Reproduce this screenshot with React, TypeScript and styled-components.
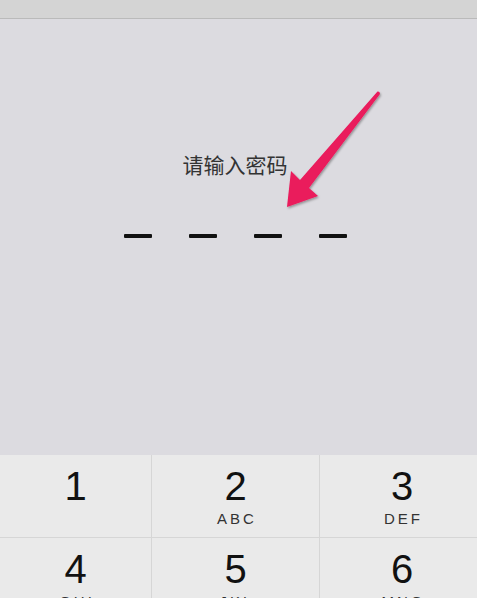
import React from "react";
import styled, { createGlobalStyle } from "styled-components";

const GlobalStyle = createGlobalStyle`
    html, body {
        margin: 0;
        padding: 0;
        background: #dcdbe0;
    }
    body {
        font-family: "Liberation Sans", "Noto Sans CJK SC", Arial, sans-serif;
    }
`;

const Screen = styled.div`
    position: relative;
    width: 477px;
    height: 598px;
    overflow: hidden;
    display: flex;
    flex-direction: column;
    background: #dcdbe0;
`;

const TopBar = styled.div`
    height: 18px;
    flex-shrink: 0;
    background: #d4d4d4;
    border-bottom: 1px solid #bababa;
`;

const Prompt = styled.div`
    height: 436px;
    flex-shrink: 0;
    display: flex;
    flex-direction: column;
    align-items: center;
    padding-right: 7px;
    box-sizing: border-box;
`;

const Title = styled.div`
    margin-top: 135px;
    font-family: "Noto Sans CJK SC", "Liberation Sans", sans-serif;
    font-size: 21px;
    line-height: 21px;
    color: #333;
`;

const Dashes = styled.div`
    display: flex;
    gap: 37px;
    margin-top: 59px;
`;

const Dash = styled.span<{ $filled?: boolean }>`
    display: block;
    width: 28px;
    height: 4px;
    border-radius: 1px;
    background: ${p => (p.$filled ? "#000" : "#111")};
`;

const Keypad = styled.div`
    display: grid;
    grid-template-columns: 151px 167px 164px;
    grid-auto-rows: 82px;
    gap: 1px;
    background: #d6d6d6;
    flex-shrink: 0;
`;

const Key = styled.div`
    background: #eaeaea;
    display: flex;
    flex-direction: column;
    align-items: center;
    padding-top: 11px;
    box-sizing: border-box;
`;

const Digit = styled.div`
    font-size: 40px;
    line-height: 40px;
    color: #111;
`;

const Letters = styled.div`
    margin-top: 5px;
    font-size: 15px;
    line-height: 15px;
    letter-spacing: 3px;
    padding-left: 3px;
    color: #333;
`;

const Arrow = styled.svg`
    position: absolute;
    left: 0;
    top: 0;
    pointer-events: none;
`;

const keys = [
    { d: "1", l: "" },
    { d: "2", l: "ABC" },
    { d: "3", l: "DEF" },
    { d: "4", l: "GHI" },
    { d: "5", l: "JKL" },
    { d: "6", l: "MNO" },
];

export default function App() {
    return (
        <>
            <GlobalStyle />
            <Screen>
                <TopBar />
                <Prompt>
                    <Title>请输入密码</Title>
                    <Dashes>
                        <Dash />
                        <Dash />
                        <Dash />
                        <Dash />
                    </Dashes>
                </Prompt>
                <Keypad>
                    {keys.map(k => (
                        <Key key={k.d}>
                            <Digit>{k.d}</Digit>
                            {k.l && <Letters>{k.l}</Letters>}
                        </Key>
                    ))}
                </Keypad>
                {/* annotation arrow drawn over the screenshot */}
                <Arrow width="477" height="598" viewBox="0 0 477 598">
                    <defs>
                        <filter id="sh" x="-20%" y="-20%" width="140%" height="140%">
                            <feDropShadow dx="1" dy="1.5" stdDeviation="1.2" floodColor="#000" floodOpacity="0.35" />
                        </filter>
                    </defs>
                    <path
                        d="M377.5 91.5 Q380 91 380 94 L309 188 L318 196 L287 207 L291 171 L300 180 Z"
                        fill="#ea1a5b"
                        filter="url(#sh)"
                    />
                </Arrow>
            </Screen>
        </>
    );
}
